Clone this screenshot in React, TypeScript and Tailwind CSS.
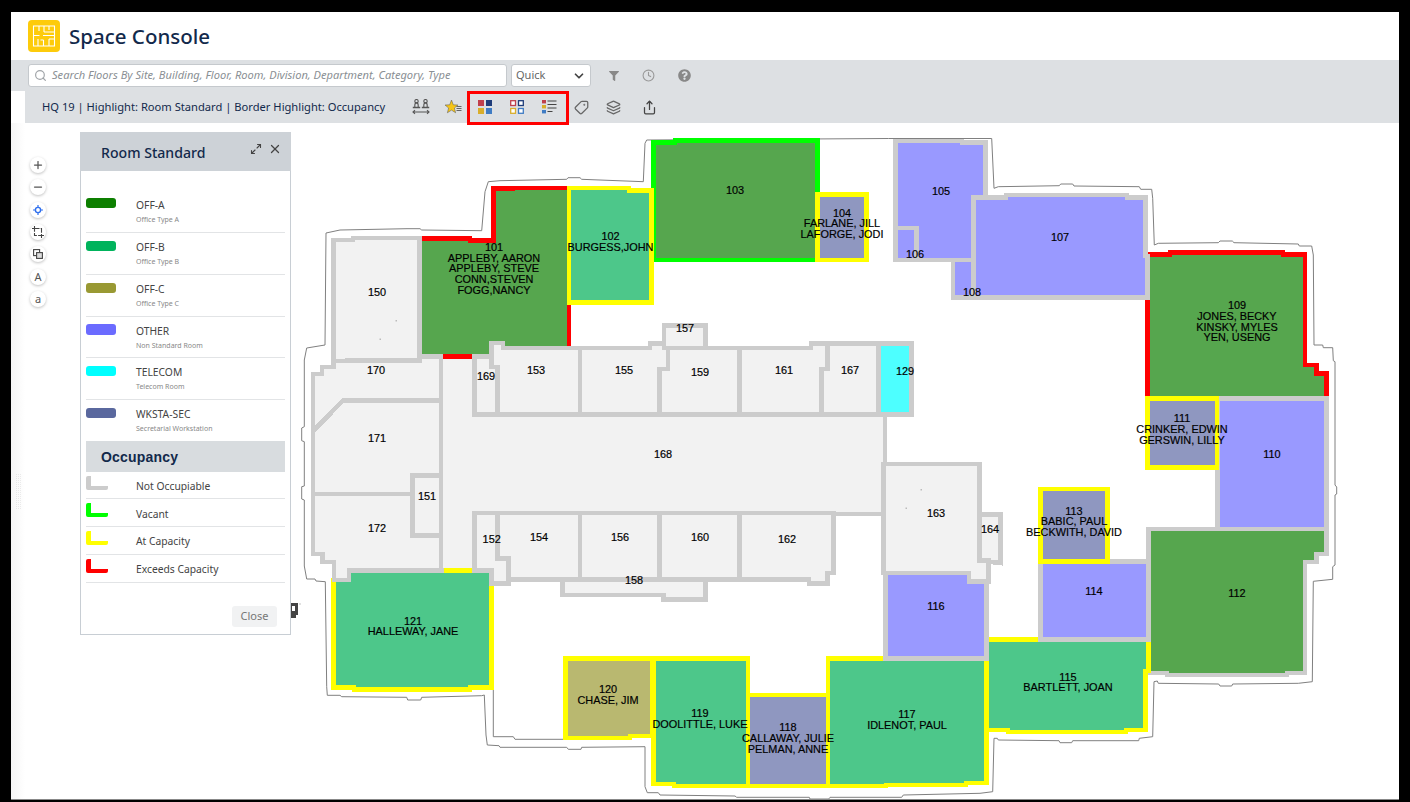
import { ChevronDown, Clock, Layers, Maximize2, Minus, Plus, Search, Share, Tag, X } from "lucide-react";
import { FaFilter, FaQuestionCircle } from "react-icons/fa";

const WALL = "#cccccc";
const YELLOW = "#ffff00";
const RED = "#ff0000";
const LIME = "#00ff00";
const GREEN = "#56a64e";
const TEAL = "#4dc78a";
const PURPLE = "#9999ff";
const SLATE = "#8f97c0";
const OLIVE = "#b9b870";
const CYAN = "#4dffff";
const ROOM = "#f2f2f2";

type Room = { points: string; fill: string; stroke: string };

// Drawn in this order, later rooms sit on top of the shared walls.
const ROOMS: Room[] = [
  { points: "419.7,238.5 470,238.5 470,240.5 493.4,240.5 493.4,188.3 513,188.3 513,188 569,188 569,348 491.7,348 491.7,356.5 419.7,356.5", fill: GREEN, stroke: RED },
  { points: "1147.7,254.5 1170,254.5 1170,252.5 1283,252.5 1283,254.5 1305,254.5 1305,365 1316.7,365 1316.7,373.7 1326.3,373.7 1326.3,398.3 1147.7,398.3", fill: GREEN, stroke: RED },
  { points: "653.3,142.5 675,142.5 675,140.5 817.7,140.5 817.7,260 653.3,260", fill: GREEN, stroke: LIME },
  { points: "1148.3,529 1326.5,529 1326.5,554 1316.7,554 1316.7,562 1305,562 1305,673 1287,673 1287,675 1167,675 1167,673 1148.3,673", fill: GREEN, stroke: WALL },
  { points: "1217.3,398.3 1326.5,398.3 1326.5,529 1217.3,529", fill: PURPLE, stroke: WALL },
  { points: "1147.7,398.3 1217,398.3 1217,467.3 1147.7,467.3", fill: SLATE, stroke: YELLOW },
  { points: "986.7,639.7 1148.3,639.7 1148.3,671 1145.5,671 1145.5,730 1126,730 1126,732 1008,732 1008,730 986.7,730", fill: TEAL, stroke: YELLOW },
  { points: "1040.7,561.7 1148.3,561.7 1148.3,639.7 1040.7,639.7", fill: PURPLE, stroke: WALL },
  { points: "1040.7,489 1107.3,489 1107.3,561.7 1040.7,561.7", fill: SLATE, stroke: YELLOW },
  { points: "333.5,580 349,580 349,570.5 491.7,570.5 491.7,687.5 470,687.5 470,689.5 354,689.5 354,687.5 333.5,687.5", fill: TEAL, stroke: YELLOW },
  { points: "565.5,658.5 652.3,658.5 652.3,736 630,736 630,738 565.5,738", fill: OLIVE, stroke: YELLOW },
  { points: "653.3,658.5 748,658.5 748,786 674,786 674,784 653.3,784", fill: TEAL, stroke: YELLOW },
  { points: "748,695 828,695 828,786 748,786", fill: SLATE, stroke: YELLOW },
  { points: "828,658.5 986.7,658.5 986.7,783 966,783 966,785 886,785 886,786 828,786", fill: TEAL, stroke: YELLOW },
  { points: "885.5,573 969,573 969,581.5 986.7,581.5 986.7,658.5 885.5,658.5", fill: PURPLE, stroke: WALL },
  { points: "817.7,194.7 866.3,194.7 866.3,260 817.7,260", fill: SLATE, stroke: YELLOW },
  { points: "569,188 629,188 629,190.5 651.7,190.5 651.7,302.3 569,302.3", fill: TEAL, stroke: YELLOW },
  { points: "895.8,141 962,141 962,142.5 985.7,142.5 985.7,197 973.7,197 973.7,260 916.3,260 916.3,228 895.8,228", fill: PURPLE, stroke: WALL },
  { points: "895.8,228 916.3,228 916.3,260 895.8,260", fill: PURPLE, stroke: WALL },
  { points: "953,260 973.7,260 973.7,297.3 953,297.3", fill: PURPLE, stroke: WALL },
  { points: "973.7,197.5 1006,197.5 1006,195 1127,195 1127,197.5 1145.5,197.5 1145.5,256 1147.7,256 1147.7,297.3 973.7,297.3", fill: PURPLE, stroke: WALL },
  { points: "441,356.5 474.4,356.5 474.4,414.5 885,414.5 885,514 474.4,513 474.4,570.5 441,570.5", fill: ROOM, stroke: WALL },
  { points: "333.5,240 353,240 353,238 419.7,238 419.7,360.5 347,360.5 347,363 333.5,363", fill: ROOM, stroke: WALL },
  { points: "313,374 322,374 322,367 333.5,367 333.5,361 419.7,361 419.7,356.5 441,356.5 441,400.5 343,400.5 313,431", fill: ROOM, stroke: WALL },
  { points: "343,400.5 441,400.5 441,494 313,494 313,431", fill: ROOM, stroke: WALL },
  { points: "313,494 412.7,494 412.7,535.5 441,535.5 441,570.5 349,570.5 349,580 334,580 334,562 322.5,562 322.5,554 313,554", fill: ROOM, stroke: WALL },
  { points: "412.7,475.8 441,475.8 441,535.5 412.7,535.5", fill: ROOM, stroke: WALL },
  { points: "474.4,356.5 491.7,356.5 491.7,367 497.5,367 497.5,414.5 474.4,414.5", fill: ROOM, stroke: WALL },
  { points: "491.7,343 503,343 503,348 580,348 580,414.5 497.5,414.5 497.5,367 491.7,367", fill: ROOM, stroke: WALL },
  { points: "580,348 650,348 650,343.7 668,343.7 668,369 659.7,369 659.7,414.5 580,414.5", fill: ROOM, stroke: WALL },
  { points: "664,348 664,325.5 705.7,325.5 705.7,348", fill: ROOM, stroke: WALL },
  { points: "659.7,369 668,369 668,348 739.5,348 739.5,414.5 659.7,414.5", fill: ROOM, stroke: WALL },
  { points: "739.5,348 811,348 811,343.7 827.7,343.7 827.7,369 821.7,369 821.7,414.5 739.5,414.5", fill: ROOM, stroke: WALL },
  { points: "827.7,343.7 878.3,343.7 878.3,414.5 821.7,414.5 821.7,369 827.7,369", fill: ROOM, stroke: WALL },
  { points: "878.3,343.7 911.7,343.7 911.7,414.5 878.3,414.5", fill: CYAN, stroke: WALL },
  { points: "562.7,579.5 705.7,579.5 705.7,599.5 663.5,599.5 663.5,595 562.7,595", fill: ROOM, stroke: WALL },
  { points: "474.4,513 497.7,513 497.7,558.5 508.3,558.5 508.3,583.5 491.7,583.5 491.7,570.5 474.4,570.5", fill: ROOM, stroke: WALL },
  { points: "497.7,513 580,513 580,579.5 508.3,579.5 508.3,558.5 497.7,558.5", fill: ROOM, stroke: WALL },
  { points: "580,513 659.7,513 659.7,579.5 580,579.5", fill: ROOM, stroke: WALL },
  { points: "659.7,513 739.5,513 739.5,579.5 659.7,579.5", fill: ROOM, stroke: WALL },
  { points: "739.5,513 833.5,513 833.5,573 827.7,573 827.7,583.5 809,583.5 809,579.5 739.5,579.5", fill: ROOM, stroke: WALL },
  { points: "979.7,514.6 1000.5,514.6 1000.5,563 979.7,560.5", fill: ROOM, stroke: WALL },
  { points: "883.7,464 979.7,464 979.7,560.5 988.3,560.5 988.3,581.5 969,581.5 969,573 883.7,573", fill: ROOM, stroke: WALL },
];

const OUTLINE =
  "304.3,360 306.7,348 325,345 326,233 340,230 407,228.7 420,228.7 421.7,230 481.7,230.7 485,191.7 488.3,181.7 500,180.7 566.7,179.3 568,177.7 580,177.7 581.7,179.3 643.3,181.7 645,143.3 646.7,140 888.3,138.5 991.7,138.5 994,188.3 998.3,186.7 1059.3,185.7 1060.7,184 1072.7,184 1074,186 1139.3,186.7 1140.7,189.3 1151.7,189.3 1152.7,198.3 1154.3,245 1158.3,243.3 1218.3,242.7 1220,241 1232.3,241 1234,242.7 1298.3,244 1299.3,246 1311.7,246 1313.3,255 1314,345 1322.7,345 1323.3,347.7 1332.7,347.7 1333.3,360.7 1335,361.7 1335,485 1336.7,487 1336.7,494 1335,495 1335,565 1332.7,566.7 1332.7,579.3 1313.3,581.3 1312.3,681.7 1298.3,683.3 1232.7,684 1231.7,686 1220,686 1218.7,684 1158.3,683.3 1157.3,681 1154,681.7 1152.7,736.7 1139.3,738.3 1138.7,740.7 1072.7,740.7 1071.7,742.7 1060,742.7 1059,740.7 998.3,740 997.3,738.3 994,738.3 992.7,791.7 980,793.3 903.3,795 901.7,797.3 830,797.3 828.7,799 810,799 809.3,797.3 736.7,797.3 735,796 660,795 658.3,792.7 647.3,792.7 645,786.7 645,746.7 581.7,747.3 581,749.3 568.3,749.3 566.7,747.3 500,747.3 499,745.7 487.3,745 486,735 484.3,695 481.7,695.7 421.7,697.3 420.7,700 407.7,700 406.7,697.3 341.7,696.7 340,695.3 327.3,695.3 326.7,686.7 325.3,581.7 316,581 315,579 306.7,579 304.3,566 304.3,500 301.7,499 301.7,486.7 304.3,486 304.3,441.7 301.7,440.7 301.7,428 304.3,426.7";

const LABELS: { x: number; y: number; text: string }[] = [
  { x: 494, y: 246.5, text: "101" }, { x: 494, y: 257.5, text: "APPLEBY, AARON" }, { x: 494, y: 268, text: "APPLEBY, STEVE" }, { x: 494, y: 279, text: "CONN,STEVEN" }, { x: 494, y: 290, text: "FOGG,NANCY" },
  { x: 610.5, y: 236, text: "102" }, { x: 610.5, y: 247, text: "BURGESS,JOHN" },
  { x: 735, y: 190, text: "103" },
  { x: 842, y: 213, text: "104" }, { x: 842, y: 223, text: "FARLANE, JILL" }, { x: 842, y: 234, text: "LAFORGE, JODI" },
  { x: 941, y: 191, text: "105" }, { x: 915, y: 254, text: "106" }, { x: 1060, y: 237, text: "107" }, { x: 972, y: 292, text: "108" },
  { x: 1237, y: 305, text: "109" }, { x: 1237, y: 316, text: "JONES, BECKY" }, { x: 1237, y: 327, text: "KINSKY, MYLES" }, { x: 1237, y: 337, text: "YEN, USENG" },
  { x: 1272, y: 454, text: "110" },
  { x: 1182, y: 418, text: "111" }, { x: 1182, y: 429, text: "CRINKER, EDWIN" }, { x: 1182, y: 440, text: "GERSWIN, LILLY" },
  { x: 1237, y: 593, text: "112" },
  { x: 1074, y: 511, text: "113" }, { x: 1074, y: 521, text: "BABIC, PAUL" }, { x: 1074, y: 532, text: "BECKWITH, DAVID" },
  { x: 1094, y: 591, text: "114" },
  { x: 1068, y: 677, text: "115" }, { x: 1068, y: 687, text: "BARTLETT, JOAN" },
  { x: 936, y: 606, text: "116" },
  { x: 907, y: 714, text: "117" }, { x: 907, y: 725, text: "IDLENOT, PAUL" },
  { x: 788, y: 727, text: "118" }, { x: 788, y: 738, text: "CALLAWAY, JULIE" }, { x: 788, y: 749, text: "PELMAN, ANNE" },
  { x: 700, y: 713, text: "119" }, { x: 700, y: 724, text: "DOOLITTLE, LUKE" },
  { x: 608, y: 689, text: "120" }, { x: 608, y: 700, text: "CHASE, JIM" },
  { x: 413, y: 621, text: "121" }, { x: 413, y: 631, text: "HALLEWAY, JANE" },
  { x: 905, y: 371, text: "129" }, { x: 377, y: 292, text: "150" }, { x: 427, y: 496, text: "151" }, { x: 491.7, y: 539, text: "152" },
  { x: 536, y: 370, text: "153" }, { x: 539, y: 537, text: "154" }, { x: 624, y: 370, text: "155" }, { x: 620, y: 537, text: "156" },
  { x: 685, y: 328, text: "157" }, { x: 634, y: 580, text: "158" }, { x: 700, y: 372, text: "159" }, { x: 700, y: 537, text: "160" },
  { x: 784, y: 370, text: "161" }, { x: 787, y: 539, text: "162" }, { x: 936, y: 513, text: "163" }, { x: 990, y: 529, text: "164" },
  { x: 850, y: 370, text: "167" }, { x: 663, y: 454, text: "168" }, { x: 486, y: 376, text: "169" }, { x: 376, y: 370, text: "170" },
  { x: 377, y: 438, text: "171" }, { x: 377, y: 528, text: "172" },
];

const STANDARDS = [
  { code: "OFF-A", name: "Office Type A", color: "bg-[#0d7f00]", row: "h-[43px] pt-2", swatch: "h-[10px]", text: "-mt-px" },
  { code: "OFF-B", name: "Office Type B", color: "bg-[#00b35c]", row: "h-[42px] pt-2", swatch: "h-[10px]", text: "-mt-[2px]" },
  { code: "OFF-C", name: "Office Type C", color: "bg-[#999933]", row: "h-[42px] pt-2", swatch: "h-[10px]", text: "-mt-[2px]" },
  { code: "OTHER", name: "Non Standard Room", color: "bg-[#6b6bff]", row: "h-[41px] pt-[7px]", swatch: "h-[11px]", text: "-mt-px" },
  { code: "TELECOM", name: "Telecom Room", color: "bg-[#00ffff]", row: "h-[42px] pt-2", swatch: "h-[10px]", text: "-mt-[2px]" },
  { code: "WKSTA-SEC", name: "Secretarial Workstation", color: "bg-[#5a689e]", row: "h-[41px] pt-2 border-b-0", swatch: "h-[10px]", text: "-mt-[2px]" },
];

const OCCUPANCY = [
  { label: "Not Occupiable", color: "border-[#cccccc]", row: "h-[27px]", text: "mt-[2px]" },
  { label: "Vacant", color: "border-[#00ff00]", row: "h-[28px]", text: "mt-[3px]" },
  { label: "At Capacity", color: "border-[#ffff00]", row: "h-[28px]", text: "mt-[2px]" },
  { label: "Exceeds Capacity", color: "border-[#ff0000]", row: "h-[28px]", text: "mt-[2px]" },
];

function FloorPlan() {
  return (
    <svg className="absolute left-0 top-0" width={1388} height={676} viewBox="11 123 1388 676">
      <defs>
        <pattern id="grip" width="2" height="2" patternUnits="userSpaceOnUse">
          <rect width="1" height="1" fill="#d4d4d4" />
        </pattern>
      </defs>
      <rect x="16" y="473" width="5" height="37" fill="url(#grip)" />
      <polygon points={OUTLINE} fill="none" stroke="#808080" strokeWidth="1" />
      <polyline points="493.3,690 493.3,736.7 513.3,736.7 515,739.3 563.3,739.3" fill="none" stroke="#808080" strokeWidth="1" />
      {ROOMS.map((room, i) => (
        <polygon
          key={i}
          points={room.points}
          fill={room.fill}
          stroke={room.stroke}
          strokeWidth="4.7"
          strokeLinejoin="miter"
          shapeRendering="crispEdges"
        />
      ))}
      <line x1="443" y1="356.5" x2="472" y2="356.5" stroke={RED} strokeWidth="4.7" shapeRendering="crispEdges" />
      <line x1="443.7" y1="570.5" x2="472" y2="570.5" stroke={YELLOW} strokeWidth="4.7" shapeRendering="crispEdges" />
      <rect x="395.5" y="320" width="1.5" height="1.5" fill="#bbb" />
      <rect x="379.5" y="338.5" width="1.5" height="1.5" fill="#bbb" />
      <rect x="920.5" y="489" width="1.5" height="1.5" fill="#bbb" />
      <rect x="905.5" y="507.5" width="1.5" height="1.5" fill="#bbb" />
      <path d="M290 603h8v12h-2v3h-6zM292 606v5h3v-5z" fill="#444" fillRule="evenodd" />
      <rect x="299.5" y="603.5" width="1" height="1" fill="#888" />
      <g
        fontFamily='"Liberation Sans", Arial, sans-serif'
        fontSize="10.9"
        fill="#000"
        stroke="#000"
        strokeWidth="0.18"
        textAnchor="middle"
      >
        {LABELS.map((l, i) => (
          <text key={i} x={l.x} y={l.y + 4}>
            {l.text}
          </text>
        ))}
      </g>
    </svg>
  );
}

function Logo() {
  return (
    <svg width="32" height="32" viewBox="0 0 32 32" className="shrink-0">
      <rect width="32" height="32" rx="4" fill="#fdcb0b" />
      <path
        d="M5.5 6h21v20h-21zM5.5 15.5h6M15 15.5h11.5M11 6v5M16 6v6M21 6v4M16 12h10.5M10 19v7M15.5 20v6M21 19v7M15.5 20h-3M21 19h5.5"
        fill="none"
        stroke="#fff"
        strokeWidth="1.1"
      />
    </svg>
  );
}

function CompareIcon() {
  return (
    <svg width="18" height="16" viewBox="0 0 18 16" fill="none" stroke="#555" strokeWidth="1.1">
      <circle cx="4.5" cy="2.2" r="1.7" />
      <circle cx="13.5" cy="2.2" r="1.7" />
      <path d="M2.8 8V6.5c0-1.2.7-2.6 1.7-2.6s1.7 1.4 1.7 2.6V8M11.8 8V6.5c0-1.2.7-2.6 1.7-2.6s1.7 1.4 1.7 2.6V8" />
      <path d="M.8 8.5h7.4M9.8 8.5h7.4" strokeWidth="1.4" />
      <path d="M1 13h16M3 11.2 1 13l2 1.8M15 11.2 17 13l-2 1.8" />
    </svg>
  );
}

function StarListIcon() {
  return (
    <svg width="18" height="17" viewBox="0 0 18 17">
      <path d="M7.5 1 9.3 5.8l4.7.2-3.6 3 1.2 4.8-4.1-2.7-4.1 2.7 1.2-4.8L1 6l4.7-.2z" fill="#f5c518" stroke="#555" strokeWidth=".5" />
      <path d="M12.5 7.5h5M12.5 9.5h5M12.5 11.5h5" stroke="#666" strokeWidth="1" />
    </svg>
  );
}

function SolidTilesIcon() {
  return (
    <svg width="14" height="14" viewBox="0 0 14 14">
      <rect width="6" height="6" fill="#c0404c" />
      <rect x="8" width="6" height="6" fill="#1f3d7a" />
      <rect y="8" width="6" height="6" fill="#d9ae2b" />
      <rect x="8" y="8" width="6" height="6" fill="#3f7cc4" />
    </svg>
  );
}

function OutlineTilesIcon() {
  return (
    <svg width="14" height="14" viewBox="0 0 14 14" fill="#fff" strokeWidth="1.3">
      <rect x=".7" y=".7" width="4.8" height="4.8" stroke="#c0404c" />
      <rect x="8.5" y=".7" width="4.8" height="4.8" stroke="#1f3d7a" />
      <rect x=".7" y="8.5" width="4.8" height="4.8" stroke="#d9ae2b" />
      <rect x="8.5" y="8.5" width="4.8" height="4.8" stroke="#3f7cc4" />
    </svg>
  );
}

function TileListIcon() {
  return (
    <svg width="15" height="14" viewBox="0 0 15 14">
      <rect y="0" width="4" height="3.4" fill="#c0404c" />
      <rect y="5" width="4" height="3.4" fill="#d9ae2b" />
      <rect y="10" width="4" height="3.4" fill="#3f7cc4" />
      <path d="M5.5 1h9M5.5 4.5h9M5.5 8h9M5.5 11.5h5" stroke="#444" strokeWidth="1.2" />
    </svg>
  );
}

function LocateIcon() {
  return (
    <svg width="10" height="10" viewBox="0 0 10 10" fill="none" stroke="#2f6fed">
      <circle cx="5" cy="5" r="2.6" strokeWidth="1.4" />
      <path d="M5 0v2M5 8v2M0 5h2M8 5h2" strokeWidth="1.2" />
    </svg>
  );
}

function CropIcon() {
  return (
    <svg width="12" height="12" viewBox="0 0 12 12" fill="none" stroke="#444" strokeWidth="1.1">
      <path d="M2.5 0v2.5M0 2.5h2.5M9.5 12V9.5M12 9.5H9.5" />
      <path d="M2.5 2.5h7v7h-7z" strokeDasharray="5 1.2" />
    </svg>
  );
}

function OverlapIcon() {
  return (
    <svg width="10" height="10" viewBox="0 0 10 10" fill="none" stroke="#444" strokeWidth="1.1">
      <rect x=".6" y=".6" width="6" height="6" />
      <rect x="3.6" y="3.6" width="5.8" height="5.8" fill="#ddd" />
    </svg>
  );
}

function ToolButton({ children }: { children: React.ReactNode }) {
  return (
    <div className="flex h-4 w-4 items-center justify-center rounded-full bg-white text-[11px] leading-none text-[#555] shadow-[0_1px_3px_rgba(0,0,0,0.25)]">
      {children}
    </div>
  );
}

function Legend() {
  return (
    <div className="ml-[34px] mt-[9px] flex h-[503px] w-[211px] flex-col border border-t-0 border-[#c8ced4] bg-white">
      <div className="-mx-px flex h-[39px] items-center justify-between bg-[#cdd2d7] pl-[21px] pr-[9px]">
        <span className="pt-[2px] text-[14.1px] font-medium text-[#12294b]">Room Standard</span>
        <div className="flex items-center gap-[6px] pb-[5px] text-[#444]">
          <Maximize2 size={12} strokeWidth={2.2} />
          <X size={14} strokeWidth={2.2} />
        </div>
      </div>
      <div className="px-[5px] pt-[19px]">
        {STANDARDS.map((s) => (
          <div key={s.code} className={`flex border-b border-[#e2e4e6] ${s.row}`}>
            <div className={`w-[30px] rounded-[3px] ${s.color} ${s.swatch}`} />
            <div className={`ml-[20px] ${s.text}`}>
              <div className="text-[10.3px] leading-[16px] text-[#444]">{s.code}</div>
              <div className="text-[7px] leading-[14px] text-[#888]">{s.name}</div>
            </div>
          </div>
        ))}
        <div className="flex h-[31px] items-center bg-[#d8dcdf] pl-[15px] pt-[2px] font-['Liberation_Sans'] text-[14px] font-bold tracking-[0.2px] text-[#12294b]">
          Occupancy
        </div>
        {OCCUPANCY.map((o) => (
          <div key={o.label} className={`flex border-b border-[#e2e4e6] pt-[4px] ${o.row}`}>
            <div className={`h-[14px] w-[22px] rounded-[2px] border-b-4 border-l-[5px] ${o.color}`} />
            <span className={`ml-[28px] text-[10.3px] leading-[16px] text-[#444] ${o.text}`}>{o.label}</span>
          </div>
        ))}
      </div>
      <div className="mb-[7px] mr-[13px] mt-auto flex justify-end">
        <div className="flex h-[21px] w-[45px] items-center justify-center rounded-[3px] bg-[#f1f2f3] text-[11px] text-[#777]">
          Close
        </div>
      </div>
    </div>
  );
}

export default function App() {
  return (
    <div className="h-[802px] w-[1410px] overflow-hidden bg-black pl-[11px] pr-[11px] pt-[12px] font-['Noto_Sans',sans-serif]">
      <div className="flex h-[788px] flex-col border-b border-[#888] bg-white">
        <div className="flex h-[48px] items-center gap-[9px] pl-[17px]">
          <Logo />
          <span className="text-[20.5px] font-medium leading-none text-[#12294b]">Space Console</span>
        </div>

        <div className="flex h-[31px] items-center bg-[#dde0e3] pl-[17px]">
          <div className="flex h-[23px] w-[479px] items-center gap-[5px] rounded-[3px] border border-[#c5c9cd] bg-white pl-[5px]">
            <Search size={13} strokeWidth={2.2} className="text-[#a0a4a8]" />
            <span className="whitespace-nowrap text-[11.1px] italic text-[#8a8f94]">
              Search Floors By Site, Building, Floor, Room, Division, Department, Category, Type
            </span>
          </div>
          <div className="ml-[4px] flex h-[23px] w-[80px] items-center justify-between rounded-[3px] border border-[#c5c9cd] bg-white pl-[4px] pr-[4px] text-[11px] text-[#666]">
            Quick
            <ChevronDown size={14} strokeWidth={3} className="text-[#444]" />
          </div>
          <div className="ml-[5px] flex h-4 w-[35px] items-center justify-center">
            <FaFilter size={10} className="text-[#888]" />
          </div>
          <div className="flex h-4 w-[34px] items-center justify-center">
            <Clock size={13} className="text-[#999]" />
          </div>
          <div className="flex h-4 w-[38px] items-center justify-center">
            <FaQuestionCircle size={13} className="text-[#888]" />
          </div>
        </div>

        <div className="relative ml-[14px] flex h-[32px] items-center bg-[#dde0e3] pl-[17px]">
          <span className="w-[363px] whitespace-nowrap text-[11.17px] text-[#12294b]">
            HQ 19 | Highlight: Room Standard | Border Highlight: Occupancy
          </span>
          <div className="flex h-4 w-8 items-center justify-center"><CompareIcon /></div>
          <div className="flex h-4 w-8 items-center justify-center"><StarListIcon /></div>
          <div className="flex h-4 w-8 items-center justify-center"><SolidTilesIcon /></div>
          <div className="flex h-4 w-8 items-center justify-center"><OutlineTilesIcon /></div>
          <div className="flex h-4 w-8 items-center justify-center"><TileListIcon /></div>
          <div className="flex h-4 w-8 items-center justify-center"><Tag size={15} className="-scale-x-100 text-[#666]" /></div>
          <div className="flex h-4 w-8 items-center justify-center"><Layers size={15} className="text-[#666]" /></div>
          <div className="ml-[4px] flex h-4 w-8 items-center justify-center"><Share size={15} className="text-[#444]" /></div>
          <div className="absolute left-[442px] top-0 h-[34px] w-[102px] border-[3px] border-[#ff0000]" />
        </div>

        <div className="relative flex flex-1">
          <FloorPlan />
          <div className="absolute inset-y-0 left-0 w-[14px] bg-gradient-to-r from-[#efefef] to-white opacity-60" />
          <div className="relative ml-[19px] flex flex-col gap-[6.33px] pt-[34px]">
            <ToolButton><Plus size={12} strokeWidth={2.5} /></ToolButton>
            <ToolButton><Minus size={12} strokeWidth={2.5} /></ToolButton>
            <ToolButton><LocateIcon /></ToolButton>
            <ToolButton><CropIcon /></ToolButton>
            <ToolButton><OverlapIcon /></ToolButton>
            <ToolButton>A</ToolButton>
            <ToolButton>a</ToolButton>
          </div>
          <div className="relative">
            <Legend />
          </div>
        </div>
      </div>
    </div>
  );
}
